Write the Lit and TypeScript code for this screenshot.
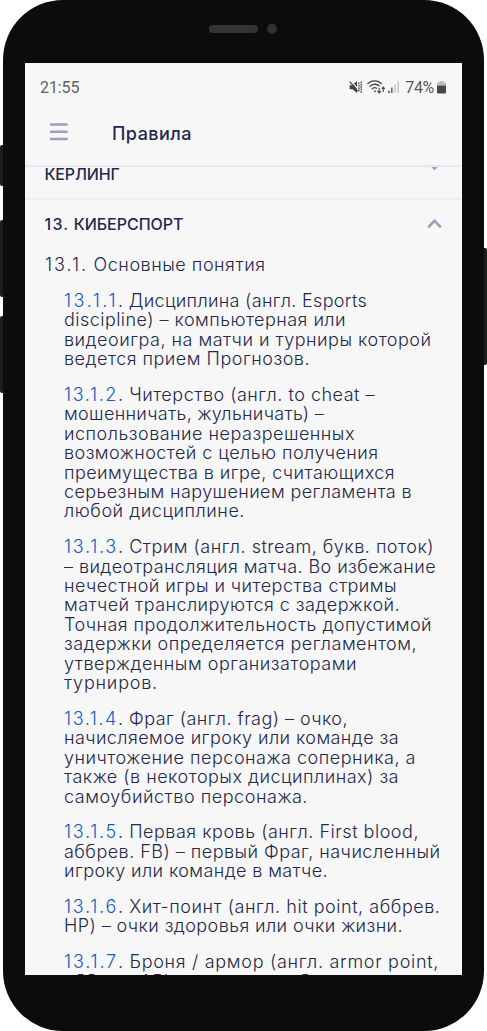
import { LitElement, html, css, svg } from "lit";
import { customElement, property } from "lit/decorators.js";

/** A line of text with the width, in pixels, that it is tracked out to. */
type Line = [text: string, width: number];
interface Clause { id: string; lines: Line[] }

const CLAUSES: Clause[] = [
  { id: "13.1.1", lines: [
    [". Дисциплина (англ. Esports", 303],
    ["discipline) – компьютерная или", 282],
    ["видеоигра, на матчи и турниры которой", 367.5],
    ["ведется прием Прогнозов.", 246] ] },
  { id: "13.1.2", lines: [
    [". Читерство (англ. to cheat –", 311],
    ["мошенничать, жульничать) –", 260],
    ["использование неразрешенных", 291],
    ["возможностей с целью получения", 314.5],
    ["преимущества в игре, считающихся", 331],
    ["серьезным нарушением регламента в", 348],
    ["любой дисциплине.", 181] ] },
  { id: "13.1.3", lines: [
    [". Стрим (англ. stream, букв. поток)", 370],
    ["– видеотрансляция матча. Во избежание", 372],
    ["нечестной игры и читерства стримы", 333],
    ["матчей транслируются с задержкой.", 336],
    ["Точная продолжительность допустимой", 368],
    ["задержки определяется регламентом,", 353],
    ["утвержденным организаторами", 293],
    ["турниров.", 94] ] },
  { id: "13.1.4", lines: [
    [". Фраг (англ. frag) – очко,", 284],
    ["начисляемое игроку или команде за", 335],
    ["уничтожение персонажа соперника, а", 352],
    ["также (в некоторых дисциплинах) за", 335],
    ["самоубийство персонажа.", 244] ] },
  { id: "13.1.5", lines: [
    [". Первая кровь (англ. First blood,", 355],
    ["аббрев. FB) – первый Фраг, начисленный", 376.5],
    ["игроку или команде в матче.", 264] ] },
  { id: "13.1.6", lines: [
    [". Хит-поинт (англ. hit point, аббрев.", 376.5],
    ["HP) – очки здоровья или очки жизни.", 339] ] },
  { id: "13.1.7", lines: [
    [". Броня / армор (англ. armor point,", 375],
    ["аббрев. AP) – показатель брони", 290] ] },
];

/** One line of text whose letter spacing is worked out from its target width. */
@customElement("fit-line")
class FitLine extends LitElement {
  static styles = css`
    :host { display: block; white-space: nowrap; }
    .run { display: inline-block; white-space: pre; }
    .lead { color: var(--lead-color, inherit); }
  `;
  @property() lead = "";
  @property({ type: Number }) leadWidth = 54;
  @property() text = "";
  @property({ type: Number }) width = 0;

  firstUpdated() {
    this.fit();
    document.fonts?.ready.then(() => this.fit());
  }
  private fit() {
    const lead = this.renderRoot.querySelector<HTMLElement>(".lead");
    if (lead) this.track(lead, this.lead.length, this.leadWidth);
    const rest = this.renderRoot.querySelector<HTMLElement>(".rest")!;
    this.track(rest, this.text.length, this.width - (lead ? this.leadWidth : 0));
  }
  private track(run: HTMLElement, count: number, width: number) {
    run.style.letterSpacing = "0px";
    run.style.letterSpacing = `${(width - run.getBoundingClientRect().width) / count}px`;
  }
  render() {
    return html`${this.lead ? html`<span class="run lead">${this.lead}</span>` : ""}<span class="run rest">${this.text}</span>`;
  }
}

const statusIcons = svg`
  <g fill="#454545">
    <path d="M.6 5.2h2.6L8 1v12L3.6 9.2H.6z"/>
    <path d="M1.4 .2l8 9.4" stroke="#f7f7f7" stroke-width="1.2"/>
    <path d="M.8 1.6l8 9.8" stroke="#454545" stroke-width="1.2"/>
    <path d="M9.9 2.4v9.4M12.2 1.4v11.4" fill="none" stroke="#454545" stroke-width="1.3" stroke-dasharray="1.7 .7"/>
  </g>
  <g fill="none" stroke="#484848" stroke-width="1.3">
    <path d="M18.4 4.1c4-4.2 10.6-4.2 14.4 0M20.6 6.7c3-3.2 7.2-3.2 10-.4M22.8 9.2c1.6-1.8 3.8-1.8 5.2-.6"/>
    <path d="M30.2 8v5M28.5 11.2l1.7 1.8 1.7-1.8M34.2 12V7.2M32.7 8.8l1.5-1.7 1.5 1.7" stroke-width="1.1"/>
  </g>
  <path d="M24.6 10.6h2.8L26 12.4z" fill="#484848"/>
  <path d="M39.2 10.8h1.5v2.2h-1.5zM42.2 7.6h1.3v5.4h-1.3z" fill="#444"/>
  <path d="M45.4 4.4h1.2v8.6h-1.2zM48.6 1.2h1.2v11.8h-1.2z" fill="#b8b8b8"/>
`;

@customElement("app-root")
class AppRoot extends LitElement {
  static styles = css`
    :host {
      display: grid; grid-template-columns: 3px 481px 3px;
      width: 487px; height: 1031px; overflow: hidden; background: #fff;
      font-family: Inter, "Open Sans", sans-serif; color: #23294d;
    }
    .side { display: flex; flex-direction: column; }
    .left { padding-top: 145px; }
    .right { padding-top: 248px; }
    .key { background: #1d1d1d; border-radius: 2px 0 0 2px; height: 77px; }
    .mute { height: 41px; margin-bottom: 34px; }
    .up { margin-bottom: 19px; }
    .power { height: 117px; border-radius: 0 2px 2px 0; }
    .phone {
      box-sizing: border-box; height: 1031px; background: #0c0c0c; border-radius: 60px;
      padding: 0 22px; display: flex; flex-direction: column;
    }
    .bezel { height: 63px; display: flex; align-items: center; justify-content: center; gap: 9px; flex: none; box-sizing: border-box; padding: 0 2px 5px 0; }
    .speaker { width: 49px; height: 8px; border-radius: 4px; background: #333; }
    .camera { width: 10px; height: 10px; border-radius: 50%; background: #333; }
    .screen {
      height: 912px; background: #f7f7f7; overflow: hidden; display: flex; flex-direction: column;
      box-sizing: border-box; border-right: 1px solid #fff;
    }
    .status {
      height: 48px; flex: none; display: flex; align-items: center; padding: 0 15px; box-sizing: border-box;
      font: 400 16px/20px Roboto, sans-serif; color: #606060;
    }
    .clock { flex: 1; padding-top: 1px; letter-spacing: -0.1px; }
    .glyphs { width: 52px; height: 14px; margin-right: 4.5px; }
    .percent { color: #5a5a5a; letter-spacing: -0.3px; padding-top: 1px; }
    .battery { width: 9px; height: 14px; margin-left: 3px; }
    .bar {
      height: 54px; flex: none; display: flex; border-bottom: 2px solid #e8e8ef; align-items: center;
      padding-left: 25px; gap: 44px;
    }
    .menu { width: 18px; height: 18px; margin-bottom: 13px; }
    .title { font-weight: 500; font-size: 18px; line-height: 22px; margin-bottom: 9px; }
    .scroll { flex: 1; min-height: 0; overflow: hidden; }
    .head {
      display: flex; justify-content: space-between; padding: 0 19px 0 19.5px;
      font-weight: 500; font-size: 16px; line-height: 20px;
    }
    .prev { height: 31px; border-bottom: 2px solid #eeeef3; }
    .prev fit-line { margin-top: -3px; }
    .chev { width: 15px; height: 10px; }
    .prev .chev { margin-top: -6px; }
    .open { padding-top: 14px; }
    .open .chev { margin-top: 4.5px; }
    .section { font-size: 18px; line-height: 20px; padding: 21px 0 0 20px; font-weight: 350; }
    .clauses {
      padding: 16px 0 0 39px; display: flex; flex-direction: column; gap: 16.4px;
      font-size: 18px; line-height: 19.4px; font-weight: 350; --lead-color: #0f60c4;
    }
  `;

  render() {
    return html`
      <div class="side left"><div class="key mute"></div><div class="key up"></div><div class="key"></div></div>
      <div class="phone">
        <div class="bezel"><div class="speaker"></div><div class="camera"></div></div>
        <div class="screen">
          <div class="status">
            <span class="clock">21:55</span>
            <svg class="glyphs" viewBox="0 0 52 14">${statusIcons}</svg>
            <span class="percent">74%</span>
            <svg class="battery" viewBox="0 0 9 14">
              <path d="M0 5.5V3.4q0-1 1-1h1.5V1h4v1.4H8q1 0 1 1v2.1z" fill="#bcbcbc"/>
              <path d="M0 5.5h9V12.5q0 1-1 1H1q-1 0-1-1z" fill="#484848"/>
            </svg>
          </div>
          <div class="bar">
            <svg class="menu" viewBox="0 0 18 18"><path d="M0 1.5h17.6M0 8.8h17.6M0 16.1h17.6" stroke="#9b9fbc" stroke-width="2.5"/></svg>
            <fit-line class="title" text="Правила" width="80"></fit-line>
          </div>
          <div class="scroll">
            <div class="head prev">
              <fit-line text="КЁРЛИНГ" width="75"></fit-line>
              <svg class="chev" viewBox="0 0 15 10"><path d="M1.5 1.5l6 6 6-6" fill="none" stroke="#9b9fbc" stroke-width="2.6"/></svg>
            </div>
            <div class="head open">
              <fit-line lead="13." .leadWidth=${25} text=" КИБЕРСПОРТ" width="139"></fit-line>
              <svg class="chev" viewBox="0 0 15 10"><path d="M1.2 8.4l6.3-6.6 6.3 6.6" fill="none" stroke="#9b9fbc" stroke-width="2.6"/></svg>
            </div>
            <fit-line class="section" lead="13.1." .leadWidth=${43} text=" Основные понятия" width="220.5"></fit-line>
            <div class="clauses">
              ${CLAUSES.map((c) => html`<div>${c.lines.map(([t, w], i) =>
                html`<fit-line .lead=${i === 0 ? c.id : ""} .text=${t} .width=${w}></fit-line>`)}</div>`)}
            </div>
          </div>
        </div>
      </div>
      <div class="side right"><div class="key power"></div></div>
    `;
  }
}
